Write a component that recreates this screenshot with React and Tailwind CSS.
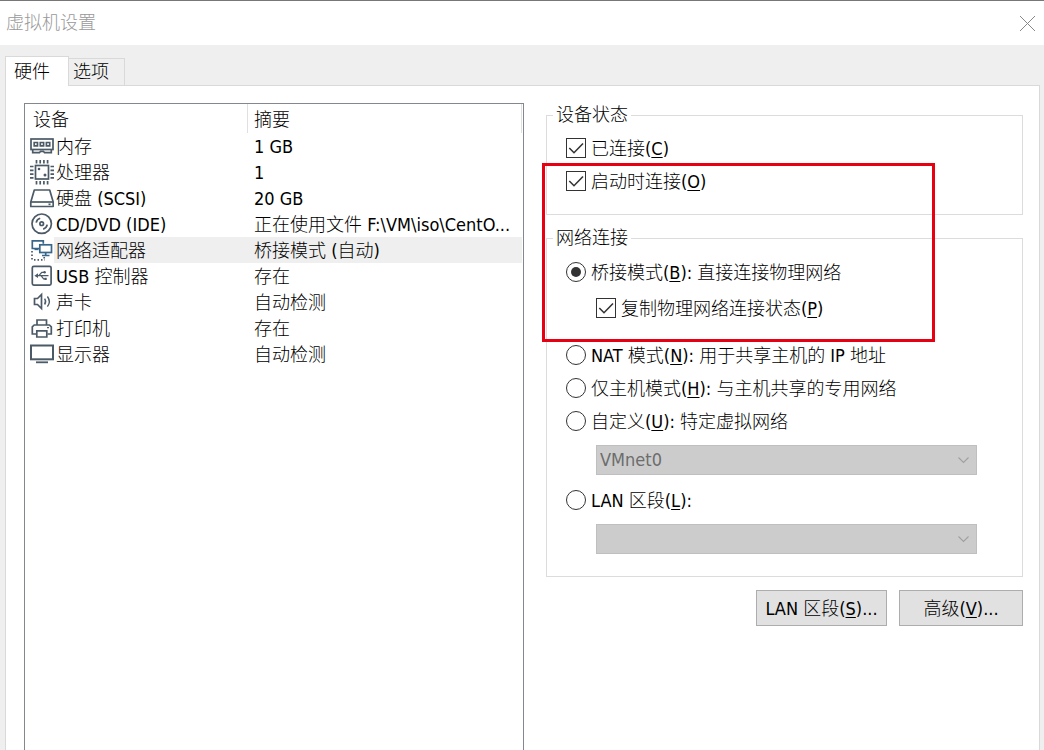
import React, { useState } from 'react';

const Icon = ({ color = '#4b5a66', children }) => (
  <svg
    className="block"
    width="25"
    height="26"
    viewBox="0 0 25 26"
    fill="none"
    stroke={color}
    strokeWidth="1.7"
    aria-hidden="true"
  >
    {children}
  </svg>
);

const MemoryIcon = () => (
  <Icon>
    <rect x="2" y="6" width="22" height="10.5" />
    <path d="M5.2 9.5h3.3v3.3H5.2zM11.3 9.5h3.3v3.3h-3.3zM17.4 9.5h3.3v3.3h-3.3z" />
    <path d="M3.7 16.5v3.2h6.8l1-1.4h3l1 1.4h6.8v-3.2" />
  </Icon>
);

const CpuIcon = () => (
  <Icon>
    <rect x="6.5" y="6.5" width="13" height="13.5" />
    <path d="M7.5 1v3.5M11.2 1v3.5M14.9 1v3.5M18.6 1v3.5M7.5 22v3.5M11.2 22v3.5M14.9 22v3.5M18.6 22v3.5" />
    <path d="M1 7.5h3.5M1 11.3h3.5M1 15.1h3.5M1 18.9h3.5M21.5 7.5H25M21.5 11.3H25M21.5 15.1H25M21.5 18.9H25" />
    <circle cx="10" cy="10" r="1.3" fill="#4b5a66" stroke="none" />
    <circle cx="16" cy="16" r="1.5" fill="#4b5a66" stroke="none" />
  </Icon>
);

const DiskIcon = () => (
  <Icon>
    <path d="M5.3 5h15.4l3.5 12v4.5H1.8V17z" strokeLinejoin="round" />
    <path d="M1.8 17h22.4" />
    <path d="M19.5 19.3h2" />
  </Icon>
);

const DiscIcon = () => (
  <Icon>
    <circle cx="12.7" cy="12.7" r="9.7" />
    <circle cx="12.7" cy="12.7" r="1.8" />
    <path d="M7.2 11.7a5.6 5.6 0 0 1 4-4.4M18.2 13.7a5.6 5.6 0 0 1-4 4.4" />
  </Icon>
);

const NetworkIcon = () => (
  <Icon color="#38678a">
    <path d="M10 11.5H3.3V3.8h11v3" />
    <path d="M5.5 12.3h4" />
    <rect x="10.8" y="7.8" width="11.7" height="7.7" />
    <path d="M16.7 15.5v2.7M13 18.5h7.5" />
    <path d="M3 14v9.5" stroke="#4b5a66" strokeDasharray="1.5 2" />
    <path d="M5 22.8h11M15.2 20v3" stroke="#4b5a66" strokeDasharray="1.5 2" />
  </Icon>
);

const UsbIcon = () => (
  <Icon>
    <rect x="3.3" y="3.3" width="18.8" height="18.8" rx="1.5" />
    <path d="M8 12.7h11.5M9.8 12.7l3-3.4h2.2M12 12.7l2.6 3.2h2" strokeWidth="1.2" />
    <path d="M9 10.3v4.8l-3.6-2.4z" fill="#4b5a66" stroke="none" />
    <circle cx="15.6" cy="9.3" r="1.2" fill="#4b5a66" stroke="none" />
    <path d="M15.5 14.8h2.2V17h-2.2z" fill="#4b5a66" stroke="none" />
  </Icon>
);

const SoundIcon = () => (
  <Icon>
    <path d="M5.5 9.5h3l4-4v14l-4-4h-3z" />
    <path d="M15.6 9.7a5 5 0 0 1 0 5.8M18.4 7.5a8.5 8.5 0 0 1 0 10.2" strokeWidth="1.4" />
  </Icon>
);

const PrinterIcon = () => (
  <Icon>
    <path d="M8 10V5h9.5v5" />
    <path d="M7 19H3.3v-7.2L5.2 10h15.2l1.9 1.8V19h-3.8" />
    <path d="M7.8 15.8h10v6.2h-10z" />
    <path d="M18 12.6h2" strokeWidth="1.2" />
  </Icon>
);

const DisplayIcon = () => (
  <Icon>
    <rect x="2" y="4.5" width="22" height="13.8" strokeWidth="2" />
    <path d="M7 21.3h12" strokeWidth="1.8" />
  </Icon>
);

const devices = [
  { name: '内存', summary: '1 GB', icon: MemoryIcon },
  { name: '处理器', summary: '1', icon: CpuIcon },
  { name: '硬盘 (SCSI)', summary: '20 GB', icon: DiskIcon },
  { name: 'CD/DVD (IDE)', summary: '正在使用文件 F:\\VM\\iso\\CentO...', icon: DiscIcon },
  { name: '网络适配器', summary: '桥接模式 (自动)', icon: NetworkIcon },
  { name: 'USB 控制器', summary: '存在', icon: UsbIcon },
  { name: '声卡', summary: '自动检测', icon: SoundIcon },
  { name: '打印机', summary: '存在', icon: PrinterIcon },
  { name: '显示器', summary: '自动检测', icon: DisplayIcon },
];

const Key = ({ children }) => (
  <>
    (<span className="underline decoration-1 underline-offset-2">{children}</span>)
  </>
);

const Checkbox = ({ defaultChecked, className = '', children }) => (
  <label className={`flex h-6 items-center gap-[5px] whitespace-nowrap ${className}`}>
    <span className="grid shrink-0">
      <input
        type="checkbox"
        defaultChecked={defaultChecked}
        className="peer col-start-1 row-start-1 size-5 appearance-none border border-[#333] bg-white"
      />
      <svg
        className="pointer-events-none invisible col-start-1 row-start-1 size-5 peer-checked:visible"
        viewBox="0 0 20 20"
        fill="none"
        stroke="#333"
        strokeWidth="1.6"
      >
        <path d="M3.3 10l4.7 4.7 9-9.2" />
      </svg>
    </span>
    <span className="pt-[2px]">{children}</span>
  </label>
);

const Radio = ({ value, mode, onSelect, className = '', children }) => (
  <label className={`flex h-6 items-center gap-[5px] whitespace-nowrap ${className}`}>
    <span className="grid shrink-0 place-items-center">
      <input
        type="radio"
        name="network"
        value={value}
        checked={mode === value}
        onChange={() => onSelect(value)}
        className="peer col-start-1 row-start-1 size-5 appearance-none rounded-full border border-[#333] bg-white"
      />
      <span className="pointer-events-none invisible col-start-1 row-start-1 size-[10px] rounded-full bg-[#333] peer-checked:visible" />
    </span>
    <span className="pt-[2px]">{children}</span>
  </label>
);

const Dropdown = ({ label, value, className = '' }) => (
  <div className={`mr-[45px] ml-[30px] grid items-center ${className}`}>
    <select
      disabled
      aria-label={label}
      className="col-start-1 row-start-1 h-[30px] w-full appearance-none border border-[#bfbfbf] bg-[#ccc] px-[3px] text-[#6d6d6d] opacity-100"
    >
      <option>{value}</option>
    </select>
    <svg
      className="pointer-events-none col-start-1 row-start-1 mr-2 justify-self-end"
      width="11"
      height="7"
      viewBox="0 0 11 7"
      fill="none"
      stroke="#a0a0a0"
      strokeWidth="1.1"
    >
      <path d="M.5.5l5 5 5-5" />
    </svg>
  </div>
);

const DeviceList = ({ selected, onSelect }) => (
  <div className="min-w-0 border border-b-0 border-[#828790] pr-px">
    <table className="w-full table-fixed border-separate border-spacing-0 text-left">
      <colgroup>
        <col className="w-[29px]" />
        <col className="w-[194px]" />
        <col />
      </colgroup>
      <thead>
        <tr className="h-[29px]">
          <th colSpan={2} className="border-r border-[#e0e0e0] p-0 pt-[2px] pl-2 font-normal">
            设备
          </th>
          <th className="border-r border-[#e0e0e0] p-0 pt-[2px] pl-[6px] font-normal">摘要</th>
        </tr>
      </thead>
      <tbody>
        {devices.map((device) => {
          const DeviceIcon = device.icon;
          const bg = device.name === selected ? 'bg-[#efefef]' : '';
          return (
            <tr key={device.name} className="h-[26px]" onClick={() => onSelect(device.name)}>
              <td className="p-0 pl-1">
                <DeviceIcon />
              </td>
              <td className={`p-0 pt-[2px] pl-[2px] whitespace-nowrap ${bg}`}>{device.name}</td>
              <td className={`p-0 pt-[2px] pl-[6px] whitespace-nowrap ${bg}`}>{device.summary}</td>
            </tr>
          );
        })}
      </tbody>
    </table>
  </div>
);

const App = () => {
  const [tab, setTab] = useState('硬件');
  const [selected, setSelected] = useState('网络适配器');
  const [mode, setMode] = useState('bridged');

  return (
    <div className="flex min-h-screen flex-col bg-[#efefef] font-['DejaVu_Sans_Condensed','Noto_Sans_CJK_SC_Light','Noto_Sans_CJK_SC',sans-serif] text-[18px] leading-6 text-black">
      <header className="flex h-[45px] items-center justify-between border-t border-[#777] bg-white pr-2 pl-[6px]">
        <h1 className="text-[#999]">虚拟机设置</h1>
        <button aria-label="关闭" className="text-[#888]">
          <svg width="17" height="17" viewBox="0 0 17 17" fill="none" stroke="currentColor">
            <path d="M1 1l15 15M16 1L1 16" />
          </svg>
        </button>
      </header>

      <main className="flex grow flex-col pt-[11px] pr-1 pl-[5px]">
        <div role="tablist" className="z-10 -mb-px flex items-end">
          {['硬件', '选项'].map((name) => (
            <button
              key={name}
              role="tab"
              aria-selected={tab === name}
              onClick={() => setTab(name)}
              className={
                tab === name
                  ? 'h-[30px] w-16 border border-b-0 border-[#d9d9d9] bg-white pl-2 text-left'
                  : 'h-7 w-14 border border-l-0 border-[#d9d9d9] pl-1 text-left'
              }
            >
              {name}
            </button>
          ))}
        </div>

        <div className="grid grow grid-cols-[500fr_477fr] gap-[22px] border border-b-0 border-[#d9d9d9] bg-white pt-[17px] pr-4 pl-[18px]">
          <DeviceList selected={selected} onSelect={setSelected} />

          <section className="relative min-w-0">
            <fieldset className="border border-[#dcdcdc]">
              <legend className="ml-[6px] px-[3px]">设备状态</legend>
              <div className="pt-[9px] pb-[21px] pl-[19px]">
                <Checkbox defaultChecked>
                  已连接<Key>C</Key>
                </Checkbox>
                <Checkbox defaultChecked className="mt-[9px]">
                  启动时连接<Key>O</Key>
                </Checkbox>
              </div>
            </fieldset>

            <fieldset className="mt-[11px] border border-[#dcdcdc]">
              <legend className="ml-[6px] px-[3px]">网络连接</legend>
              <div className="pt-[10px] pb-[22px] pl-[19px]">
                <Radio value="bridged" mode={mode} onSelect={setMode}>
                  桥接模式<Key>B</Key>: 直接连接物理网络
                </Radio>
                <Checkbox defaultChecked className="mt-3 ml-[30px]">
                  复制物理网络连接状态<Key>P</Key>
                </Checkbox>
                <Radio value="nat" mode={mode} onSelect={setMode} className="mt-[23px]">
                  NAT 模式<Key>N</Key>: 用于共享主机的 IP 地址
                </Radio>
                <Radio value="host" mode={mode} onSelect={setMode} className="mt-[9px]">
                  仅主机模式<Key>H</Key>: 与主机共享的专用网络
                </Radio>
                <Radio value="custom" mode={mode} onSelect={setMode} className="mt-[9px]">
                  自定义<Key>U</Key>: 特定虚拟网络
                </Radio>
                <Dropdown label="特定虚拟网络" value="VMnet0" className="mt-3" />
                <Radio value="lan" mode={mode} onSelect={setMode} className="mt-[13px]">
                  LAN 区段<Key>L</Key>:
                </Radio>
                <Dropdown label="LAN 区段" value="" className="mt-3" />
              </div>
            </fieldset>

            <div className="mt-[13px] flex justify-end gap-3">
              <button className="h-9 w-[131px] border border-[#adadad] bg-[#e1e1e1] pt-[2px] whitespace-nowrap">
                LAN 区段<Key>S</Key>...
              </button>
              <button className="h-9 w-[124px] border border-[#adadad] bg-[#e1e1e1] pt-[2px] whitespace-nowrap">
                高级<Key>V</Key>...
              </button>
            </div>

            <div className="pointer-events-none absolute top-[60px] -left-1 h-[179px] w-[393px] border-3 border-[#e60012]" />
          </section>
        </div>
      </main>
    </div>
  );
};

export default App;
